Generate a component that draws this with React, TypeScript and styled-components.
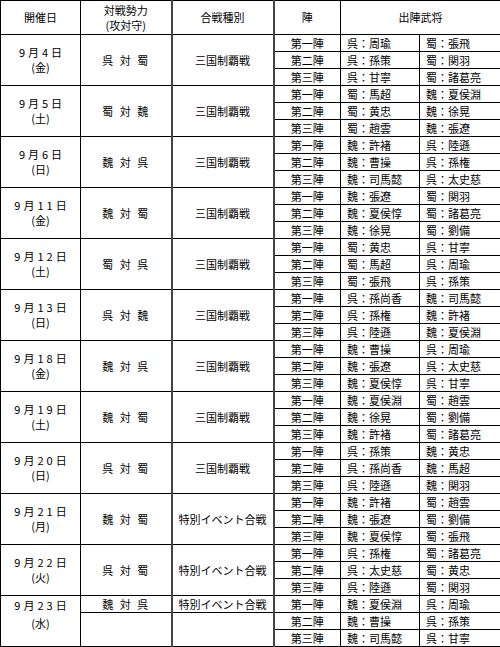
import React from 'react'
import styled, { createGlobalStyle } from 'styled-components'

const Global = createGlobalStyle`
  html, body { margin: 0; padding: 0; background: #fff; }
  body { font-family: "Noto Sans CJK JP", "Liberation Sans", sans-serif; color: #000; }
`

const Sheet = styled.table`
  border-collapse: collapse;
  table-layout: fixed;
  width: 500px;
  font-size: 11px;
  line-height: 15px;
  border: 1px solid #000;
`

const HeadRow = styled.tr`height: 34px;`
const SubRow  = styled.tr`height: 17px;`

const Cell = styled.td<{ $thick?: boolean }>`
  border: 1px solid #000;
  ${p => p.$thick ? 'border-left: 2px solid #444;' : ''}
  padding: 0;
  text-align: center;
  vertical-align: middle;
  white-space: nowrap;
  overflow: hidden;
`

const HeadCell = styled(Cell).attrs({ as: 'th' })`
  font-weight: normal;
`

const DateCell = styled(Cell)<{ $top?: boolean }>`
  ${p => p.$top ? 'vertical-align: top; padding-top: 0; line-height: 18px;' : ''}
`

const DateText = styled.span`
  letter-spacing: 3px;
  margin-right: -3px;
`

const SideCell = styled(Cell)`
  letter-spacing: 1px;
  word-spacing: 2px;
`

const GeneralCell = styled(Cell)`
  text-align: left;
  padding-left: 6px;
`

type Group = {
  date: string
  day: string
  sides: string
  kind?: string
  rows: [string, string][]
}

const groups: Group[] = [
  { date: '9月4日', day: '(金)', sides: '呉 対 蜀', rows: [['呉：周瑜', '蜀：張飛'], ['呉：孫策', '蜀：関羽'], ['呉：甘寧', '蜀：諸葛亮']] },
  { date: '9月5日', day: '(土)', sides: '蜀 対 魏', rows: [['蜀：馬超', '魏：夏侯淵'], ['蜀：黄忠', '魏：徐晃'], ['蜀：趙雲', '魏：張遼']] },
  { date: '9月6日', day: '(日)', sides: '魏 対 呉', rows: [['魏：許褚', '呉：陸遜'], ['魏：曹操', '呉：孫権'], ['魏：司馬懿', '呉：太史慈']] },
  { date: '9月11日', day: '(金)', sides: '魏 対 蜀', rows: [['魏：張遼', '蜀：関羽'], ['魏：夏侯惇', '蜀：諸葛亮'], ['魏：徐晃', '蜀：劉備']] },
  { date: '9月12日', day: '(土)', sides: '蜀 対 呉', rows: [['蜀：黄忠', '呉：甘寧'], ['蜀：馬超', '呉：周瑜'], ['蜀：張飛', '呉：孫策']] },
  { date: '9月13日', day: '(日)', sides: '呉 対 魏', rows: [['呉：孫尚香', '魏：司馬懿'], ['呉：孫権', '魏：許褚'], ['呉：陸遜', '魏：夏侯淵']] },
  { date: '9月18日', day: '(金)', sides: '魏 対 呉', rows: [['魏：曹操', '呉：周瑜'], ['魏：張遼', '呉：太史慈'], ['魏：夏侯惇', '呉：甘寧']] },
  { date: '9月19日', day: '(土)', sides: '魏 対 蜀', rows: [['魏：夏侯淵', '蜀：趙雲'], ['魏：徐晃', '蜀：劉備'], ['魏：許褚', '蜀：諸葛亮']] },
  { date: '9月20日', day: '(日)', sides: '呉 対 蜀', rows: [['呉：孫策', '魏：黄忠'], ['呉：孫尚香', '魏：馬超'], ['呉：陸遜', '魏：関羽']] },
  { date: '9月21日', day: '(月)', sides: '魏 対 蜀', kind: '特別イベント合戦', rows: [['魏：許褚', '蜀：趙雲'], ['魏：張遼', '蜀：劉備'], ['魏：夏侯惇', '蜀：張飛']] },
  { date: '9月22日', day: '(火)', sides: '呉 対 蜀', kind: '特別イベント合戦', rows: [['呉：孫権', '蜀：諸葛亮'], ['呉：太史慈', '蜀：黄忠'], ['呉：陸遜', '蜀：関羽']] },
]

const last: Group = {
  date: '9月23日', day: '(水)', sides: '魏 対 呉', kind: '特別イベント合戦',
  rows: [['魏：夏侯淵', '呉：周瑜'], ['魏：曹操', '呉：孫策'], ['魏：司馬懿', '呉：甘寧']],
}

const rounds = ['第一陣', '第二陣', '第三陣']

const GroupRows = ({ g }: { g: Group }) => (
  <>
    {g.rows.map((r, i) => (
      <SubRow key={i}>
        {i === 0 ? (
          <>
            <DateCell rowSpan={3}><DateText>{g.date}</DateText><br />{g.day}</DateCell>
            <SideCell rowSpan={3}>{g.sides}</SideCell>
            <Cell rowSpan={3} $thick>{g.kind ?? '三国制覇戦'}</Cell>
          </>
        ) : null}
        <Cell $thick>{rounds[i]}</Cell>
        <GeneralCell>{r[0]}</GeneralCell>
        <GeneralCell>{r[1]}</GeneralCell>
      </SubRow>
    ))}
  </>
)

export default function App() {
  return (
    <>
      <Global />
      <Sheet>
        <colgroup>
          <col style={{ width: 80 }} />
          <col style={{ width: 91 }} />
          <col style={{ width: 102 }} />
          <col style={{ width: 67 }} />
          <col style={{ width: 79 }} />
          <col style={{ width: 81 }} />
        </colgroup>
        <thead>
          <HeadRow>
            <HeadCell>開催日</HeadCell>
            <HeadCell>対戦勢力<br />(攻対守)</HeadCell>
            <HeadCell $thick>合戦種別</HeadCell>
            <HeadCell $thick>陣</HeadCell>
            <HeadCell colSpan={2}>出陣武将</HeadCell>
          </HeadRow>
        </thead>
        <tbody>
          {groups.map(g => <GroupRows key={g.date} g={g} />)}
          {last.rows.map((r, i) => (
            <SubRow key={'l' + i}>
              {i === 0 ? (
                <>
                  <DateCell rowSpan={3} $top><DateText>{last.date}</DateText><br />{last.day}</DateCell>
                  <SideCell>{last.sides}</SideCell>
                  <Cell $thick>{last.kind}</Cell>
                </>
              ) : null}
              {i === 1 ? (
                <>
                  <Cell rowSpan={2} />
                  <Cell rowSpan={2} $thick />
                </>
              ) : null}
              <Cell $thick>{rounds[i]}</Cell>
              <GeneralCell>{r[0]}</GeneralCell>
              <GeneralCell>{r[1]}</GeneralCell>
            </SubRow>
          ))}
        </tbody>
      </Sheet>
    </>
  )
}
